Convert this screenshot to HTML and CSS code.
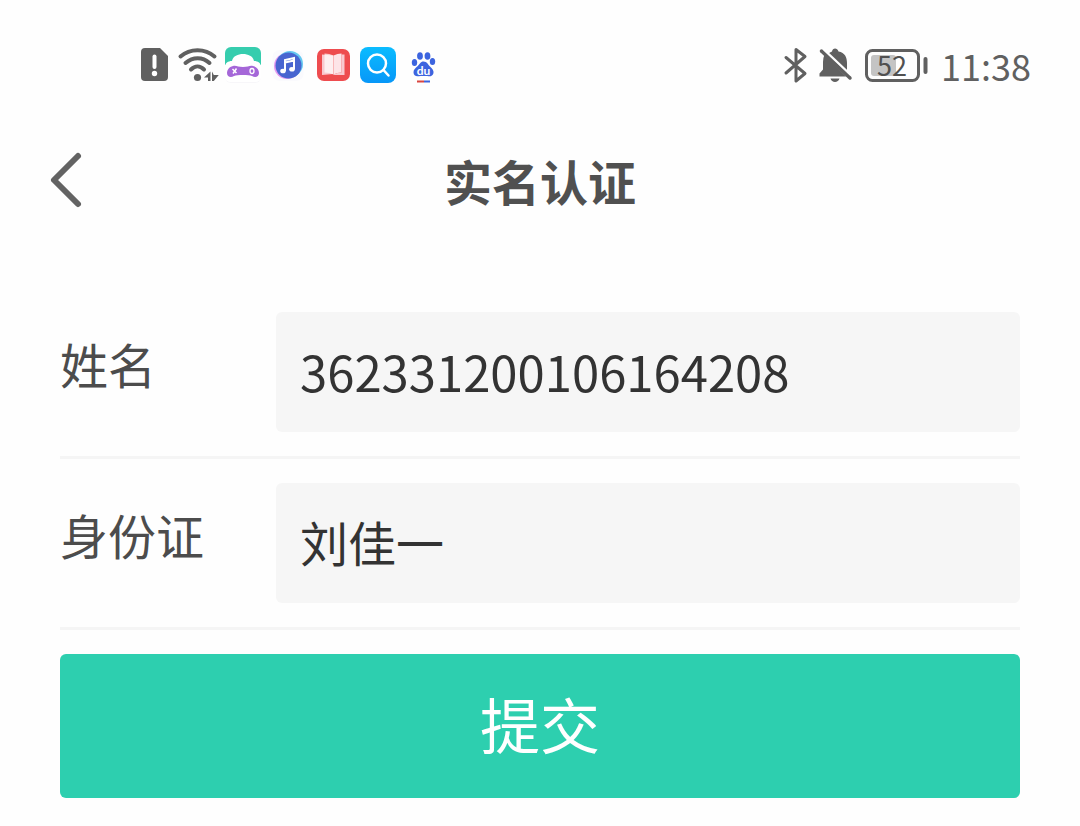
FILE: index.html
```html
<!DOCTYPE html>
<html lang="zh-CN">
<head>
<meta charset="utf-8">
<meta name="viewport" content="width=device-width, initial-scale=1">
<title>实名认证</title>
<link rel="stylesheet" href="styles.css">
</head>
<body>
<div class="status-bar">
  <div class="status-group status-apps">
    <svg class="icon" width="28" height="36" viewBox="0 0 28 36" aria-hidden="true">
      <path fill="#606060" d="M4 1h15l8 8v21a4 4 0 0 1-4 4H4a4 4 0 0 1-4-4V5a4 4 0 0 1 4-4z"/>
      <path stroke="#fff" stroke-width="4" stroke-linecap="round" d="M13.500 9.500v10.500"/>
      <circle cx="13.500" cy="26.500" r="2.700" fill="#fff"/>
    </svg>
    <svg class="icon" width="38" height="36" viewBox="0 0 38 36" aria-hidden="true">
      <g fill="none" stroke="#606060" stroke-width="4" stroke-linecap="round">
        <path d="M2.500 9.500C12 1 27 1 36.500 9.500"/>
        <path d="M7.500 16C15 9.500 24.500 9.500 31.500 16"/>
        <path d="M13 22.500c4-4 9-4 13 0"/>
      </g>
      <circle cx="19.500" cy="30.500" r="3.600" fill="#606060"/>
      <path fill="#606060" d="M32.500 24.500V34h-2.500v-3.500H26zM34 24.500V34h1.800l5-6h-5z"/>
    </svg>
    <svg class="icon" width="36" height="36" viewBox="0 0 36 36" aria-hidden="true">
      <rect width="36" height="36" rx="6" fill="#f7f6f9"/>
      <path fill="#36cdae" d="M6 0h24a6 6 0 0 1 6 6v12H0V6a6 6 0 0 1 6-6z"/>
      <path fill="#fff" d="M0 20c0-4 3-6 7-6 1-5 6-7 11-7s10 2 11 7c4 0 7 2 7 6v10a5 5 0 0 1-5 5H5a5 5 0 0 1-5-5z"/>
      <path fill="#a567d8" d="M8 19c3-1 5 1 10 1s7-2 10-1c4 1 6 4 6 7 0 4-4 5-7 3-2-1-5-1-9-1s-7 0-9 1c-3 2-7 1-7-3 0-3 2-6 6-7z"/>
      <path stroke="#fff" stroke-width="1.500" d="M7.500 22l4 4M11.500 21.500l-3.500 5"/>
      <ellipse cx="27" cy="24" rx="2" ry="2.500" fill="none" stroke="#fff" stroke-width="1.300"/>
    </svg>
    <svg class="icon" width="36" height="36" viewBox="0 0 36 36" aria-hidden="true">
      <rect x="2.500" y="3" width="31" height="31" rx="7" fill="#fafafd"/>
      <circle cx="17" cy="19" r="13" fill="#e49af0"/>
      <circle cx="20" cy="17" r="13" fill="#63c8f0"/>
      <circle cx="18.500" cy="18.500" r="13" fill="#4865d0"/>
      <path fill="none" stroke="#fff" stroke-width="2" d="M15 24V13l9-2v11M15 15.500l9-2"/>
      <ellipse cx="13" cy="24" rx="2.800" ry="2.300" fill="#fff"/>
      <ellipse cx="22" cy="22.300" rx="2.800" ry="2.300" fill="#fff"/>
    </svg>
    <svg class="icon" width="36" height="36" viewBox="0 0 36 36" aria-hidden="true">
      <rect x="2" y="2" width="33" height="32" rx="7" fill="#ee4c4f"/>
      <path fill="#f9c9d0" d="M7 7.500l11 1v18.500l-11 1z"/>
      <path fill="#fff" d="M9.500 6.500q5 0 9 2v19q-4-2-9-2z" opacity=".7"/>
      <path fill="#fde4e8" d="M18.500 8.500q4-2 8-2v19q-4 0-8 2z"/>
      <path fill="#f9c9d0" d="M26.500 7.500h3V28h-11v-.5q4-2 8-2z"/>
    </svg>
    <svg class="icon" width="36" height="36" viewBox="0 0 36 36" aria-hidden="true">
      <defs><linearGradient id="sky" x1="0" y1="0" x2="0" y2="1"><stop offset="0" stop-color="#0bbcff"/><stop offset="1" stop-color="#0797f8"/></linearGradient></defs>
      <rect width="36" height="36" rx="8" fill="url(#sky)"/>
      <circle cx="17" cy="16.500" r="9" fill="none" stroke="#fff" stroke-width="2.500"/>
      <path stroke="#fff" stroke-width="2.500" stroke-linecap="round" d="M23.500 23l5 5.500"/>
    </svg>
    <svg class="icon" width="36" height="36" viewBox="0 0 36 36" aria-hidden="true">
      <g fill="#3c64df">
        <ellipse cx="9.500" cy="15.500" rx="2.700" ry="3.600"/>
        <ellipse cx="15" cy="9" rx="2.900" ry="3.800"/>
        <ellipse cx="22.500" cy="9" rx="2.900" ry="3.800"/>
        <ellipse cx="27.500" cy="14.500" rx="2.700" ry="3.600"/>
        <path d="M18.500 14.500c3.500 0 4.500 3 6.500 5s4 4 3.500 6.500-2.500 3.500-5 3.300-7-.3-10 0-5-1-5-4 2-4 4-6 3-4.800 6-4.800z"/>
      </g>
      <text class="paw-text" x="18.500" y="27.500" text-anchor="middle">du</text>
      <path fill="#d9453f" d="M12 33.500h7v2h-7z"/>
      <path fill="#3c64df" d="M19 33.500h6v2h-6z"/>
    </svg>
  </div>
  <div class="status-group status-system">
    <svg class="icon" width="24" height="36" viewBox="0 0 24 36" aria-hidden="true">
      <path fill="none" stroke="#606060" stroke-width="3" stroke-linecap="round" stroke-linejoin="round" d="M3 10.500L22 26.500 13 34V2.500L22 9.500 3 26"/>
    </svg>
    <svg class="icon" width="34" height="36" viewBox="0 0 34 36" aria-hidden="true">
      <path fill="#606060" d="M.5 29.500v-3l3.500-4V15q0-4 1.500-7.500L27 29.500zM9 7q2-2 4-2.500c.5-4 5.500-4 6.500 0 6.500 1 8.500 6 8.500 11.500v9.500zM11.500 31.500h9c-1 4.500-8 4.500-9 0z"/>
      <path stroke="#606060" stroke-width="3.500" stroke-linecap="round" d="M2.500 4l28.500 27"/>
      <path stroke="#fff" stroke-width="2" d="M5 2.500l27 25.500"/>
    </svg>
    <svg class="icon" width="64" height="36" viewBox="0 0 64 36" aria-hidden="true">
      <rect x="1.500" y="3.500" width="52" height="30" rx="6" fill="none" stroke="#606060" stroke-width="3"/>
      <rect x="6" y="8" width="25" height="21" rx="3" fill="#c4c4c4"/>
      <text class="battery-text" x="27" y="28.500" text-anchor="middle">52</text>
      <rect x="58.500" y="10" width="4" height="17" rx="2" fill="#606060"/>
    </svg>
    <time class="clock">11:38</time>
  </div>
</div>
<header class="header">
  <button class="back" type="button" aria-label="返回">
    <svg class="icon" width="36" height="60" viewBox="0 0 36 60" aria-hidden="true">
      <path fill="none" stroke="#636363" stroke-width="6" stroke-linecap="round" stroke-linejoin="round" d="M30 6L6 30l24 24"/>
    </svg>
  </button>
  <h1 class="title">实名认证</h1>
</header>
<form class="form">
  <div class="row">
    <label class="label" for="name">姓名</label>
    <input class="field field-digits" id="name" type="text" value="362331200106164208">
  </div>
  <div class="row">
    <label class="label" for="idcard">身份证</label>
    <input class="field" id="idcard" type="text" value="刘佳一">
  </div>
  <button class="submit" type="submit">提交</button>
</form>
</body>
</html>
```
FILE: styles.css
```css
* {
  box-sizing: border-box;
}

body {
  margin: 0;
  background: #fefefe;
  color: #4c4c4c;
  font-family: "Noto Sans CJK SC", sans-serif;
}

.icon {
  display: block;
  flex: none;
  overflow: visible;
}

.status-bar {
  display: flex;
  align-items: center;
  justify-content: space-between;
  height: 130px;
  padding: 0 49px 0 141px;
}

.status-group {
  display: flex;
  align-items: center;
}

.status-apps {
  gap: 9px;
}

.status-system {
  gap: 12px;
}

.clock {
  color: #606060;
  font-size: 36px;
  font-weight: 400;
  line-height: 36px;
}

.battery-text {
  fill: #505050;
  font-size: 27px;
  font-weight: 400;
}

.paw-text {
  fill: #fff;
  font-family: Lato, sans-serif;
  font-size: 12px;
  font-weight: 700;
}

.header {
  display: grid;
  grid-template-columns: 36px 1fr 36px;
  align-items: center;
  height: 100px;
  padding: 0 48px;
}

.back {
  padding: 0;
  border: 0;
  background: none;
}

.title {
  margin: 0;
  color: #505050;
  font-size: 48px;
  font-weight: 700;
  line-height: 72px;
  text-align: center;
}

.form {
  padding: 58px 60px 28px;
}

.row {
  display: flex;
  align-items: flex-start;
  padding: 24px 0;
  border-bottom: 3px solid #f5f5f5;
}

.label {
  flex: none;
  width: 216px;
  font-size: 48px;
  line-height: 102px;
}

.field {
  flex: 1;
  min-width: 0;
  height: 120px;
  padding: 0 24px 4px;
  border: 0;
  border-radius: 6px;
  background: #f6f6f6;
  color: #333;
  font-family: inherit;
  font-size: 48px;
}

.field-digits {
  font-size: 49px;
}

.submit {
  display: block;
  width: 100%;
  height: 144px;
  margin-top: 24px;
  padding: 0 0 8px;
  border: 0;
  border-radius: 6px;
  background: #2dcfaf;
  color: #fff;
  font-family: inherit;
  font-size: 60px;
}
```
